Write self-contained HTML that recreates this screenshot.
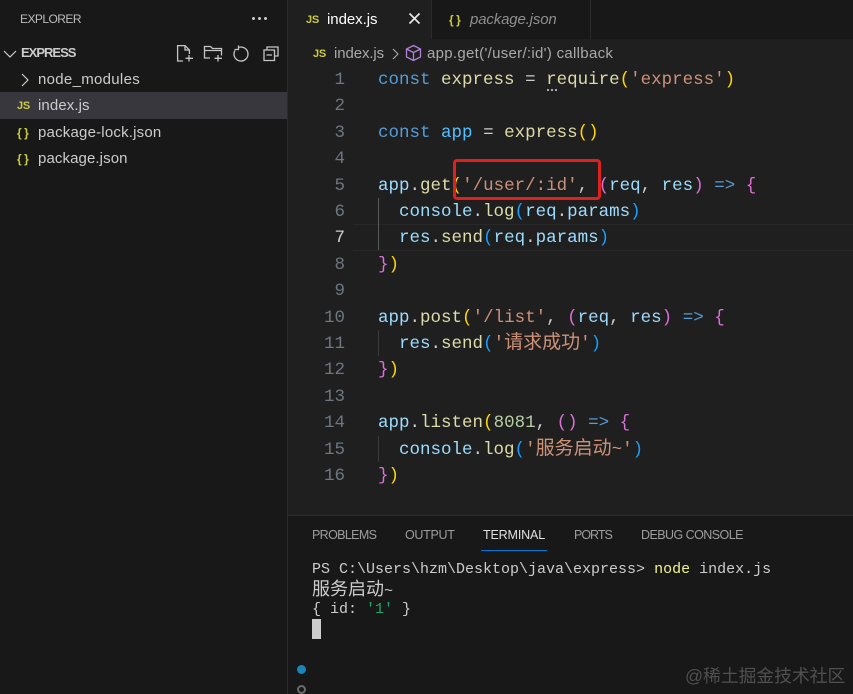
<!DOCTYPE html>
<html><head><meta charset="utf-8">
<style>
html,body{margin:0;padding:0;background:#1f1f1f}
#r{position:relative;width:853px;height:694px;overflow:hidden;background:#1f1f1f;font-family:"Liberation Sans","Noto Sans CJK SC",sans-serif}
#r div,#r svg{position:absolute}
.t{white-space:pre;line-height:20px;height:20px}
.f{font-size:15px;color:#cccccc;left:38px;letter-spacing:.1px}
.js{font-weight:700;font-size:11px;color:#cbcb41;letter-spacing:-.2px}
.br{font-weight:700;font-size:12px;color:#cbcb41;letter-spacing:2.500px}
.ln{left:310px;width:35px;text-align:right;font:17.5px/26px "Liberation Mono",monospace;color:#6e7681;height:26px}
.c{left:378px;font:17.5px/26px "Liberation Mono","Noto Sans CJK SC",monospace;white-space:pre;height:26px;color:#9cdcfe}
.c i{font-style:normal;font-size:19px;line-height:1}
.k{color:#569cd6}.v{color:#4fc1ff}.m{color:#dcdcaa}.s{color:#ce9178}.y{color:#ffd700}.p{color:#da70d6}.b{color:#179fff}.w{color:#cccccc}.n{color:#b5cea8}.a{color:#569cd6}
.tb{font-size:12.5px;color:#9d9d9d;top:525px;white-space:pre;line-height:20px;letter-spacing:-.3px}
.o{left:312px;font:15px/20px "Liberation Mono","Noto Sans CJK SC",monospace;color:#cccccc;white-space:pre;height:20px}
.o i{font-style:normal;font-size:18px;line-height:1}
</style></head><body>
<div id="r">
<!-- sidebar -->
<div style="left:0;top:0;width:287px;height:694px;background:#181818"></div>
<div style="left:287px;top:0;width:1px;height:694px;background:#2b2b2b"></div>
<div class="t" style="left:20px;top:9px;font-size:12px;color:#bbbbbb;letter-spacing:-.55px">EXPLORER</div>
<div style="left:252px;top:17px;width:3px;height:3px;border-radius:2px;background:#ccc;box-shadow:6px 0 #ccc,12px 0 #ccc"></div>
<svg style="left:2px;top:47px" width="16" height="14" fill="none" stroke="#cccccc" stroke-width="1.2"><path d="M2 4l6 6 6-6"/></svg>
<div class="t" style="left:21px;top:43px;font-size:13px;font-weight:700;color:#cccccc;letter-spacing:-1px">EXPRESS</div>
<svg style="left:175px;top:44px" width="105" height="20" fill="none" stroke="#c5c5c5" stroke-width="1.3">
<path d="M8 17H2.600V1.600H10l4.400 4.400v4M10 1.600V6h4.400M14 11v6.500M10.500 14.300h7.500"/>
<path d="M35 14h-5.500V2.500h6l2 2h9v7M29.500 6.500h17M43 11v6.500M39.500 14.300h7.500"/>
<path d="M63 3.700A7 7 0 1 1 60 6.400M63.500 1.500V5.500H59.500"/>
<path d="M92 6V3h11v9h-3M89 6h10.500v10.500H89zM91.500 11h5.500"/>
</svg>
<div class="t f" style="top:70px;letter-spacing:.3px">node_modules</div>
<svg style="left:20px;top:73px" width="12" height="14" fill="none" stroke="#cccccc" stroke-width="1.2"><path d="M2 1l6 6-6 6"/></svg>
<div style="left:0;top:92px;width:287px;height:27px;background:#37373d"></div>
<div class="t js" style="left:17px;top:96px">JS</div>
<div class="t f" style="top:96px">index.js</div>
<div class="t br" style="left:17px;top:123px">{}</div>
<div class="t f" style="top:123px;letter-spacing:.2px">package-lock.json</div>
<div class="t br" style="left:17px;top:149px">{}</div>
<div class="t f" style="top:149px">package.json</div>
<!-- tabs -->
<div style="left:288px;top:0;width:565px;height:39px;background:#181818"></div>
<div style="left:288px;top:0;width:143px;height:39px;background:#1f1f1f"></div>
<div style="left:431px;top:0;width:1px;height:39px;background:#2b2b2b"></div>
<div style="left:590px;top:0;width:1px;height:39px;background:#2b2b2b"></div>
<div class="t js" style="left:306px;top:10px">JS</div>
<div class="t" style="left:327px;top:10px;font-size:15px;color:#ffffff;letter-spacing:-.05px">index.js</div>
<svg style="left:408px;top:12px" width="13" height="13" fill="none" stroke="#e8e8e8" stroke-width="1.700"><path d="M1.500 1.500l10 10M11.500 1.500l-10 10"/></svg>
<div class="t br" style="left:449px;top:10px">{}</div>
<div class="t" style="left:470px;top:10px;font-size:15px;font-style:italic;color:#8f8f8f;letter-spacing:-.15px">package.json</div>
<!-- breadcrumb -->
<div class="t js" style="left:313px;top:44px">JS</div>
<div class="t" style="left:334px;top:44px;font-size:15px;color:#a9a9a9;letter-spacing:-.1px">index.js</div>
<svg style="left:391px;top:47px" width="10" height="14" fill="none" stroke="#a9a9a9" stroke-width="1.100"><path d="M2 2l5 5-5 5"/></svg>
<svg style="left:405px;top:44px" width="17" height="18" fill="none" stroke="#b180d7" stroke-width="1.300"><path d="M8.500 1.500l7 3.500v8l-7 3.500-7-3.500V5zM1.500 5l7 3.500 7-3.500M8.500 8.500v8"/></svg>
<div class="t" style="left:427px;top:44px;font-size:15px;color:#a9a9a9;letter-spacing:.3px">app.get('/user/:id') callback</div>
<!-- active line + guides -->
<div style="left:353px;top:224px;width:500px;height:25px;border-top:1px solid #282828;border-bottom:1px solid #282828"></div>
<div style="left:378px;top:198px;width:1px;height:52px;background:#5a5a5a"></div>
<div style="left:378px;top:330px;width:1px;height:26px;background:#3a3a3a"></div>
<div style="left:378px;top:436px;width:1px;height:26px;background:#3a3a3a"></div>
<!-- line numbers -->
<div class="ln" style="top:67px">1</div><div class="ln" style="top:93px">2</div><div class="ln" style="top:120px">3</div><div class="ln" style="top:146px">4</div>
<div class="ln" style="top:173px">5</div><div class="ln" style="top:199px">6</div><div class="ln" style="top:225px;color:#cccccc">7</div><div class="ln" style="top:252px">8</div>
<div class="ln" style="top:278px">9</div><div class="ln" style="top:305px">10</div><div class="ln" style="top:331px">11</div><div class="ln" style="top:357px">12</div>
<div class="ln" style="top:384px">13</div><div class="ln" style="top:410px">14</div><div class="ln" style="top:437px">15</div><div class="ln" style="top:463px">16</div>
<!-- code -->
<div class="c" style="top:67px"><span class="k">const</span> <span class="m">express</span> <span class="w">=</span> <span class="m">require</span><span class="y">(</span><span class="s">'express'</span><span class="y">)</span></div>
<div style="left:547px;top:89px;width:2px;height:2px;background:#aaa;box-shadow:4px 0 #aaa,8px 0 #aaa"></div>
<div class="c" style="top:120px"><span class="k">const</span> <span class="v">app</span> <span class="w">=</span> <span class="m">express</span><span class="y">()</span></div>
<div class="c" style="top:173px"><span>app</span><span class="w">.</span><span class="m">get</span><span class="y">(</span><span class="s">'/user/:id'</span><span class="w">,</span> <span class="p">(</span>req<span class="w">,</span> res<span class="p">)</span> <span class="a">=&gt;</span> <span class="p">{</span></div>
<div class="c" style="top:199px">  console<span class="w">.</span><span class="m">log</span><span class="b">(</span>req<span class="w">.</span>params<span class="b">)</span></div>
<div class="c" style="top:225px">  res<span class="w">.</span><span class="m">send</span><span class="b">(</span>req<span class="w">.</span>params<span class="b">)</span></div>
<div class="c" style="top:252px"><span class="p">}</span><span class="y">)</span></div>
<div class="c" style="top:305px">app<span class="w">.</span><span class="m">post</span><span class="y">(</span><span class="s">'/list'</span><span class="w">,</span> <span class="p">(</span>req<span class="w">,</span> res<span class="p">)</span> <span class="a">=&gt;</span> <span class="p">{</span></div>
<div class="c" style="top:331px">  res<span class="w">.</span><span class="m">send</span><span class="b">(</span><span class="s">'<i>请求成功</i>'</span><span class="b">)</span></div>
<div class="c" style="top:357px"><span class="p">}</span><span class="y">)</span></div>
<div class="c" style="top:410px">app<span class="w">.</span><span class="m">listen</span><span class="y">(</span><span class="n">8081</span><span class="w">,</span> <span class="p">()</span> <span class="a">=&gt;</span> <span class="p">{</span></div>
<div class="c" style="top:437px">  console<span class="w">.</span><span class="m">log</span><span class="b">(</span><span class="s">'<i>服务启动</i>~'</span><span class="b">)</span></div>
<div class="c" style="top:463px"><span class="p">}</span><span class="y">)</span></div>
<!-- red box -->
<div style="left:453px;top:159px;width:142px;height:35px;border:3px solid #e0201c;border-radius:4px"></div>
<!-- panel -->
<div style="left:288px;top:515px;width:565px;height:179px;background:#181818;border-top:1px solid #2b2b2b"></div>
<div class="tb" style="left:312px;letter-spacing:-.65px">PROBLEMS</div>
<div class="tb" style="left:405px">OUTPUT</div>
<div class="tb" style="left:483px;color:#e0e0e0;letter-spacing:-.15px">TERMINAL</div>
<div class="tb" style="left:574px;letter-spacing:-1px">PORTS</div>
<div class="tb" style="left:641px;letter-spacing:-.55px">DEBUG CONSOLE</div>
<div style="left:481px;top:550px;width:66px;height:1px;background:#0078d4"></div>
<div class="o" style="top:560px">PS C:\Users\hzm\Desktop\java\express&gt; <span style="color:#f1f58f">node</span> index.js</div>
<div class="o" style="top:582px"><i>服务启动</i>~</div>
<div class="o" style="top:600px">{ id: <span style="color:#23a56f">'1'</span> }</div>
<div style="left:312px;top:619px;width:9px;height:20px;background:#cccccc"></div>
<div style="left:297px;top:665px;width:9px;height:9px;border-radius:50%;background:#1a85b8"></div>
<div style="left:297px;top:685px;width:5px;height:5px;border-radius:50%;border:2px solid #6b6b6b"></div>
<!-- watermark -->
<div class="t" style="left:685px;top:666px;font-size:17.800px;line-height:20px;color:#505050">@稀土掘金技术社区</div>
</div>
</body></html>
